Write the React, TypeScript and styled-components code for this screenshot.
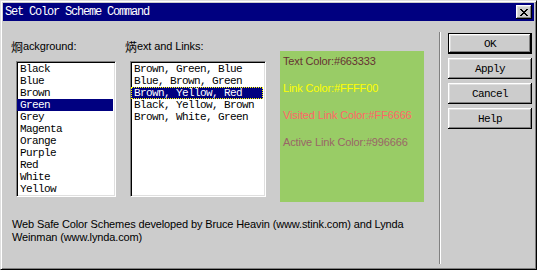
import * as React from "react";
import styled, { createGlobalStyle } from "styled-components";

const GlobalStyle = createGlobalStyle`
  html, body {
    margin: 0;
    padding: 0;
    background: #cccccc;
  }
  * {
    box-sizing: border-box;
  }
`;

const mono = `"Liberation Mono", "DejaVu Sans Mono", monospace`;
const sans = `"Liberation Sans", Arial, "Noto Sans CJK SC", sans-serif`;

const Window = styled.div`
  width: 537px;
  height: 270px;
  display: flex;
  flex-direction: column;
  background: #cccccc;
  border: 1px solid;
  border-color: #dfdfdf #000000 #000000 #dfdfdf;
  box-shadow: inset 1px 1px #ffffff, inset -1px -1px #808080;
  padding: 2px;
`;

const TitleBar = styled.div`
  height: 18px;
  flex: none;
  display: flex;
  align-items: center;
  justify-content: space-between;
  background: #000080;
  padding: 0 2px 0 2px;
`;

const Title = styled.span`
  font-family: ${mono};
  font-size: 12px;
  letter-spacing: -1.2px;
  color: #ffffff;
  white-space: pre;
`;

const CloseButton = styled.div`
  width: 16px;
  height: 14px;
  display: flex;
  align-items: center;
  justify-content: center;
  background: #cccccc;
  box-shadow: inset -1px -1px #000000, inset 1px 1px #ffffff,
    inset -2px -2px #808080, inset 2px 2px #dfdfdf;
  padding-top: 1px;
`;

const Body = styled.div`
  flex: 1;
  display: flex;
  align-items: stretch;
`;

const LeftPanel = styled.div`
  width: 436px;
  display: flex;
  flex-direction: column;
  padding: 19px 0 0 8px;
`;

const Columns = styled.div`
  display: flex;
  align-items: flex-start;
`;

const Column = styled.div<{ $shift?: number; $top?: number }>`
  display: flex;
  flex-direction: column;
  margin-left: ${(p) => p.$shift ?? 0}px;
  margin-top: ${(p) => p.$top ?? 0}px;
`;

const Label = styled.div`
  height: 13px;
  line-height: 13px;
  margin-bottom: 8px;
  font-family: ${sans};
  font-size: 11px;
  letter-spacing: -0.1px;
  color: #000000;
  white-space: nowrap;
`;

const Mnemonic = styled.span`
  font-family: "Noto Sans CJK SC", sans-serif;
  font-size: 12px;
  vertical-align: top;
`;

const ListBox = styled.div<{ $width: number }>`
  width: ${(p) => p.$width}px;
  height: 136px;
  margin-left: 5px;
  background: #ffffff;
  border: 1px solid;
  border-color: #808080 #ffffff #ffffff #808080;
  box-shadow: inset 1px 1px #000000, inset -1px -1px #dfdfdf;
  padding: 1px 2px 1px 1px;
  display: flex;
  flex-direction: column;
`;

const ListItem = styled.div<{ $selected?: boolean; $focused?: boolean }>`
  height: 12px;
  line-height: 11px;
  padding-left: 2px;
  font-family: ${mono};
  font-size: 11px;
  letter-spacing: -0.6px;
  white-space: pre;
  color: ${(p) => (p.$selected ? "#ffffff" : "#000000")};
  background: ${(p) => (p.$selected ? "#000080" : "transparent")};
  border: 1px dotted ${(p) => (p.$focused ? "#ffff00" : "transparent")};
  margin-left: -1px;
`;

const Preview = styled.div`
  width: 144px;
  height: 151px;
  background: #99cc66;
  padding: 4px 3px;
  display: flex;
  flex-direction: column;
  gap: 14px;
`;

const PreviewLine = styled.div<{ $color: string }>`
  height: 13px;
  line-height: 13px;
  font-family: ${sans};
  font-size: 11px;
  letter-spacing: -0.15px;
  color: ${(p) => p.$color};
  white-space: nowrap;
`;

const Credits = styled.p`
  margin: 16px 0 0 1px;
  font-family: ${sans};
  font-size: 11px;
  line-height: 13px;
  letter-spacing: -0.13px;
  color: #000000;
`;

const Separator = styled.div`
  width: 2px;
  margin: 11px 0 3px;
  border-left: 1px solid #808080;
  border-right: 1px solid #ffffff;
`;

const ButtonColumn = styled.div`
  display: flex;
  flex-direction: column;
  gap: 4px;
  padding: 12px 0 0 7px;
`;

const Button = styled.button<{ $default?: boolean }>`
  width: 84px;
  height: 21px;
  padding: 0;
  margin: 0;
  background: #cccccc;
  border: ${(p) => (p.$default ? "1px solid #000000" : "none")};
  box-shadow: inset -1px -1px #000000, inset 1px 1px #ffffff,
    inset -2px -2px #808080, inset 2px 2px #dfdfdf;
  font-family: ${mono};
  font-size: 11px;
  letter-spacing: -0.6px;
  color: #000000;
  display: flex;
  align-items: center;
  justify-content: center;
`;

const CloseGlyph = () => {
  const rows = ["XX....XX", ".XX..XX.", "..XXXX..", "...XX...", "..XXXX..", ".XX..XX.", "XX....XX"];
  return (
    <svg width="8" height="7" viewBox="0 0 8 7" shapeRendering="crispEdges">
      {rows.map((row, y) =>
        row.split("").map((c, x) =>
          c === "X" ? <rect key={`${x}-${y}`} x={x} y={y} width="1" height="1" fill="#000000" /> : null
        )
      )}
    </svg>
  );
};

const backgrounds = ["Black", "Blue", "Brown", "Green", "Grey", "Magenta", "Orange", "Purple", "Red", "White", "Yellow"];
const schemes = [
  "Brown, Green, Blue",
  "Blue, Brown, Green",
  "Brown, Yellow, Red",
  "Black, Yellow, Brown",
  "Brown, White, Green",
];

const previewLines = [
  { text: "Text Color:#663333", color: "#663333" },
  { text: "Link Color:#FFFF00", color: "#ffff00" },
  { text: "Visited Link Color:#FF6666", color: "#ff6666" },
  { text: "Active Link Color:#996666", color: "#996666" },
];

export default function App() {
  const [bg, setBg] = React.useState("Green");
  const [scheme, setScheme] = React.useState("Brown, Yellow, Red");

  return (
    <>
      <GlobalStyle />
      <Window>
        <TitleBar>
          <Title>Set Color Scheme Command</Title>
          <CloseButton>
            <CloseGlyph />
          </CloseButton>
        </TitleBar>
        <Body>
          <LeftPanel>
            <Columns>
              <Column>
                <Label>
                  <Mnemonic>烱</Mnemonic>ackground:
                </Label>
                <ListBox $width={100}>
                  {backgrounds.map((b) => (
                    <ListItem key={b} $selected={b === bg} onClick={() => setBg(b)}>
                      {b}
                    </ListItem>
                  ))}
                </ListBox>
              </Column>
              <Column $shift={9}>
                <Label>
                  <Mnemonic>焫</Mnemonic>ext and Links:
                </Label>
                <ListBox $width={136}>
                  {schemes.map((s) => (
                    <ListItem
                      key={s}
                      $selected={s === scheme}
                      $focused={s === scheme}
                      onClick={() => setScheme(s)}
                    >
                      {s}
                    </ListItem>
                  ))}
                </ListBox>
              </Column>
              <Column $shift={14} $top={11}>
                <Preview>
                  {previewLines.map((l) => (
                    <PreviewLine key={l.text} $color={l.color}>
                      {l.text}
                    </PreviewLine>
                  ))}
                </Preview>
              </Column>
            </Columns>
            <Credits>
              Web Safe Color Schemes developed by Bruce Heavin (www.stink.com) and Lynda
              <br />
              Weinman (www.lynda.com)
            </Credits>
          </LeftPanel>
          <Separator />
          <ButtonColumn>
            <Button $default>OK</Button>
            <Button>Apply</Button>
            <Button>Cancel</Button>
            <Button>Help</Button>
          </ButtonColumn>
        </Body>
      </Window>
    </>
  );
}
